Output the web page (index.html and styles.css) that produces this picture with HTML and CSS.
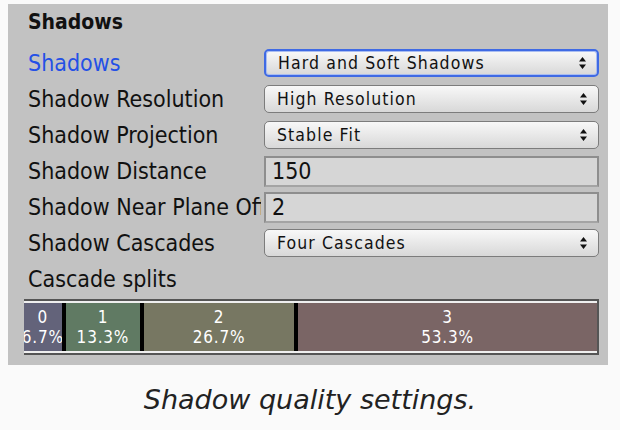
FILE: index.html
```html
<!DOCTYPE html>
<html>
<head>
<meta charset="utf-8">
<link rel="stylesheet" href="styles.css">
</head>
<body>
<div class="panel">
  <div class="title">Shadows</div>
  <div class="row">
    <div class="label active">Shadows</div>
    <div class="dropdown focused"><span class="dd-text">Hard and Soft Shadows</span><svg class="arrows" width="7" height="12" viewBox="0 0 7 12"><path d="M3.5 0 L7 4.5 L0 4.5 Z M3.5 12 L7 7.5 L0 7.5 Z" fill="#111"/></svg></div>
  </div>
  <div class="row">
    <div class="label">Shadow Resolution</div>
    <div class="dropdown"><span class="dd-text">High Resolution</span><svg class="arrows" width="7" height="12" viewBox="0 0 7 12"><path d="M3.5 0 L7 4.5 L0 4.5 Z M3.5 12 L7 7.5 L0 7.5 Z" fill="#111"/></svg></div>
  </div>
  <div class="row">
    <div class="label">Shadow Projection</div>
    <div class="dropdown"><span class="dd-text">Stable Fit</span><svg class="arrows" width="7" height="12" viewBox="0 0 7 12"><path d="M3.5 0 L7 4.5 L0 4.5 Z M3.5 12 L7 7.5 L0 7.5 Z" fill="#111"/></svg></div>
  </div>
  <div class="row">
    <div class="label">Shadow Distance</div>
    <div class="field">150</div>
  </div>
  <div class="row">
    <div class="label">Shadow Near Plane Offset</div>
    <div class="field">2</div>
  </div>
  <div class="row">
    <div class="label">Shadow Cascades</div>
    <div class="dropdown"><span class="dd-text">Four Cascades</span><svg class="arrows" width="7" height="12" viewBox="0 0 7 12"><path d="M3.5 0 L7 4.5 L0 4.5 Z M3.5 12 L7 7.5 L0 7.5 Z" fill="#111"/></svg></div>
  </div>
  <div class="row">
    <div class="label">Cascade splits</div>
  </div>
  <div class="cascades">
    <div class="seg seg0" style="flex-grow:6.7"><span>0</span><span>6.7%</span></div>
    <div class="divider"></div>
    <div class="seg seg1" style="flex-grow:13.3"><span>1</span><span>13.3%</span></div>
    <div class="divider"></div>
    <div class="seg seg2" style="flex-grow:26.7"><span>2</span><span>26.7%</span></div>
    <div class="divider"></div>
    <div class="seg seg3" style="flex-grow:53.3"><span>3</span><span>53.3%</span></div>
  </div>
</div>
<p class="caption">Shadow quality settings.</p>
</body>
</html>
```

FILE: styles.css
```css
html, body {
  margin: 0;
  padding: 0;
  background: #fafafa;
}
body {
  width: 620px;
  height: 430px;
  overflow: hidden;
}
.panel {
  margin: 4px 0 0 8px;
  width: 600px;
  box-sizing: border-box;
  background: #c2c2c2;
  padding: 6px 9px 10px 16px;
  font-family: "DejaVu Sans Condensed", "DejaVu Sans", sans-serif;
  color: #111;
}
.title {
  font-weight: bold;
  font-size: 21px;
  line-height: 24px;
  padding-left: 4px;
  margin-bottom: 11px;
}
.row {
  display: grid;
  grid-template-columns: 237px 1fr;
  column-gap: 3px;
  height: 36px;
  align-items: center;
}
.label {
  font-size: 23px;
  padding-left: 4px;
  white-space: nowrap;
  overflow: hidden;
  line-height: 36px;
}
.label.active {
  color: #2450e6;
}
.dropdown {
  height: 28px;
  box-sizing: border-box;
  border: 1.5px solid #7c7c7c;
  border-radius: 5px;
  background: linear-gradient(#f8f8f8, #e8e8e8 50%, #d8d8d8);
  display: flex;
  align-items: center;
  justify-content: space-between;
  padding: 0 11px 0 12px;
  margin-top: -1px;
}
.dropdown.focused {
  border: 2px solid #3f6ae4;
  box-shadow: inset 0 0 0 1px #a9bdf1;
}
.dd-text {
  font-size: 17.5px;
  letter-spacing: 1.1px;
  color: #111;
}
.arrows {
  display: block;
}
.field {
  height: 31px;
  box-sizing: border-box;
  border: 2px solid #8e8e8e;
  border-bottom-color: #a4a4a4;
  background: #d6d6d6;
  font-size: 23px;
  line-height: 27px;
  padding-left: 6px;
}
.cascades {
  margin-top: 2px;
  height: 56px;
  box-sizing: border-box;
  border-top: 2px solid #555;
  border-bottom: 2px solid #555;
  border-right: 2px solid #555;
  display: flex;
  padding: 2px 0;
  background: #efefef;
}
.seg {
  flex-basis: 0;
  overflow: hidden;
  display: flex;
  flex-direction: column;
  align-items: center;
  justify-content: center;
  color: #fff;
  font-size: 17px;
  line-height: 20px;
  letter-spacing: 0.8px;
  white-space: nowrap;
}
.seg0 { background: #63637a; }
.seg1 { background: #607a63; }
.seg2 { background: #777762; }
.seg3 { background: #7a6565; }
.divider {
  width: 4px;
  background: #000;
  flex: none;
}
.caption {
  margin: 18px 0 0 0;
  text-align: center;
  font-family: "DejaVu Sans", sans-serif;
  font-style: italic;
  font-size: 27px;
  line-height: 34px;
  color: #222;
}
```
